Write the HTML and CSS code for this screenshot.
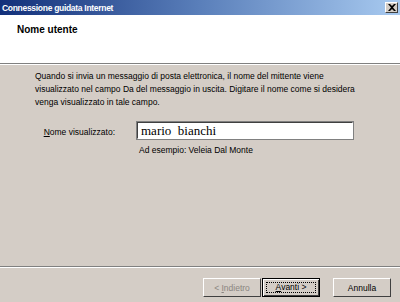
FILE: index.html
```html
<!DOCTYPE html>
<html lang="it">
<head>
  <meta charset="UTF-8">
  <title>Connessione guidata Internet</title>
  <link rel="stylesheet" href="styles.css">
</head>
<body>
  <div class="window">
    <div class="titlebar">
      <span class="title">Connessione guidata Internet</span>
      <div class="close-btn">
        <svg width="8" height="7" viewBox="0 0 8 7"><path d="M0 0h2l2 2 2-2h2L5 3.5 8 7H6L4 5 2 7H0l3-3.5z" fill="#000"/></svg>
      </div>
    </div>

    <div class="header">
      <h1>Nome utente</h1>
    </div>

    <div class="content">
      <p class="intro">Quando si invia un messaggio di posta elettronica, il nome del mittente viene<br>visualizzato nel campo Da del messaggio in uscita. Digitare il nome come si desidera<br>venga visualizzato in tale campo.</p>
      <div class="field-row">
        <label for="nome"><u>N</u>ome visualizzato:</label>
        <div class="field">
          <input id="nome" type="text" value="mario  bianchi">
          <small>Ad esempio: Veleia Dal Monte</small>
        </div>
      </div>
    </div>

    <div class="footer">
      <button class="btn" disabled>&lt; <u>I</u>ndietro</button>
      <button class="btn default"><span class="focus"><u>A</u>vanti &gt;</span></button>
      <button class="btn cancel">Annulla</button>
    </div>
  </div>
</body>
</html>
```

FILE: styles.css
```css
* { box-sizing: border-box; }
body {
  margin: 0;
  font-family: 'Liberation Sans', Arial, sans-serif;
  font-size: 8.5px;
  color: #000;
  background: #d4cdc6;
}
.window {
  width: 400px;
  height: 302px;
  display: flex;
  flex-direction: column;
}
.titlebar {
  height: 15px;
  background: linear-gradient(to right, #12307a, #5a7fba 50%, #a8caf0);
  display: flex;
  align-items: center;
  justify-content: space-between;
  padding: 0 2px 0 2px;
}
.title {
  color: #fff;
  font-weight: bold;
  font-size: 8.5px;
  letter-spacing: -0.3px;
}
.close-btn {
  width: 13px;
  height: 11px;
  background: #d4cdc6;
  border: 1px solid;
  border-color: #fff #404040 #404040 #fff;
  display: flex;
  align-items: center;
  justify-content: center;
}
.header {
  height: 49px;
  background: #fff;
  border-bottom: 1px solid #808080;
  box-shadow: 0 1px 0 #fff;
  padding: 9px 0 0 17px;
}
.header h1 {
  margin: 0;
  font-size: 10px;
  font-weight: bold;
}
.content {
  flex: 1;
  padding: 6px 0 0 35px;
}
.intro {
  margin: 0;
  line-height: 13px;
}
.field-row {
  display: flex;
  margin-top: 12px;
}
.field-row label {
  width: 102px;
  flex-shrink: 0;
  text-align: right;
  white-space: nowrap;
  padding: 6px 22px 0 0;
}
.field {
  display: flex;
  flex-direction: column;
}
.field input {
  width: 216px;
  height: 17px;
  border: 1px solid;
  border-color: #404040 #fff #fff #404040;
  outline: 1px solid #808080;
  font-family: 'Liberation Serif', 'Times New Roman', serif;
  font-size: 13px;
  padding: 0 3px;
  margin: 1px 0 0 0;
  background: #fff;
}
.field small {
  font-size: 8.5px;
  margin: 6px 0 0 2px;
}
.footer {
  height: 36px;
  border-top: 1px solid #808080;
  box-shadow: inset 0 1px 0 #fff;
  display: flex;
  align-items: flex-start;
  padding: 11px 0 0 203px;
}
.btn {
  width: 58px;
  height: 19px;
  margin: 0;
  padding: 0;
  background: #d4cdc6;
  border: 1px solid;
  border-color: #fff #404040 #404040 #fff;
  font-family: inherit;
  font-size: 8.5px;
  color: #000;
}
.btn[disabled] {
  color: #8a8580;
}
.btn.default {
  margin-left: 1px;
  border: 1px solid #000;
  box-shadow: inset 1px 1px 0 #fff, inset -1px -1px 0 #404040;
  padding: 3px;
}
.focus {
  display: block;
  height: 100%;
  border: 1px dotted #000;
  line-height: 9px;
}
.btn.cancel {
  margin-left: 13px;
}
```
